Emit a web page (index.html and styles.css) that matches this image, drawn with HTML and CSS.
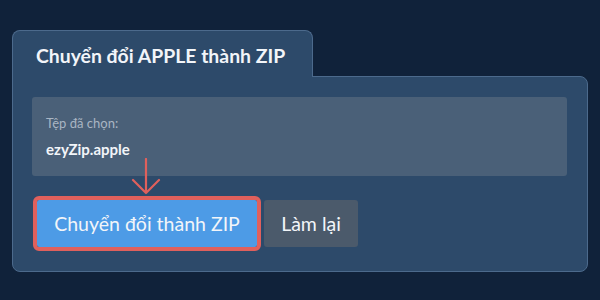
FILE: index.html
```html
<!DOCTYPE html>
<html lang="vi">
<head>
    <meta charset="UTF-8">
    <meta name="viewport" content="width=device-width, initial-scale=1.0">
    <title>Chuyển đổi APPLE thành ZIP</title>
    <link rel="stylesheet" href="styles.css">
</head>
<body>
    <div class="converter">
        <div class="tab">Chuyển đổi APPLE thành ZIP</div>

        <div class="panel">
            <div class="file-box">
                <div class="file-label">Tệp đã chọn:</div>
                <div class="file-name">ezyZip.apple</div>
            </div>

            <div class="actions">
                <div class="convert-wrap">
                    <!-- hint arrow pointing at the convert button -->
                    <svg class="hint-arrow" width="30" height="38" viewBox="0 0 30 38">
                        <path d="M15 1 V35 M2 22 L15 35 L28 22" fill="none" stroke="#e0605c" stroke-width="2.2" stroke-linecap="round" stroke-linejoin="round"/>
                    </svg>
                    <button class="btn btn-convert">Chuyển đổi thành ZIP</button>
                </div>
                <button class="btn btn-reset">Làm lại</button>
            </div>
        </div>
    </div>
</body>
</html>
```

FILE: styles.css
```css
:root {
    --page: #10223a;
    --panel: #2d4a6a;
    --panel-border: #4c6a8c;
    --box: #4a6078;
    --muted: #a9b5c3;
    --blue: #4d9be6;
    --red: #e0605c;
    --grey: #4b5a6b;
    --text: #f2f5f9;
}

body {
    margin: 0;
    padding: 30px 12px;
    background: var(--page);
    font-family: Lato, 'Noto Sans', sans-serif;
    color: var(--text);
}

.converter {
    display: flex;
    flex-direction: column;
    align-items: flex-start;
}

.tab {
    position: relative;
    z-index: 1;
    margin-bottom: -1px;
    padding: 15px 27px 11px 23px;
    background: var(--panel);
    border: 1px solid var(--panel-border);
    border-bottom: none;
    border-radius: 8px 8px 0 0;
    font-size: 19.4px;
    font-weight: 700;
    line-height: 20px;
}

.panel {
    align-self: stretch;
    padding: 20px 20px 20px 19px;
    background: var(--panel);
    border: 1px solid var(--panel-border);
    border-radius: 0 8px 8px 8px;
}

.file-box {
    height: 79px;
    box-sizing: border-box;
    padding: 18px 14px 0;
    background: var(--box);
    border-radius: 3px;
}

.file-label {
    font-size: 13px;
    line-height: 16px;
    color: var(--muted);
}

.file-name {
    margin-top: 8px;
    font-size: 15px;
    font-weight: 700;
    line-height: 20px;
}

.actions {
    display: flex;
    align-items: center;
    gap: 7px;
    margin-top: 20px;
    padding: 4px 0 4px 5px;
}

.convert-wrap {
    position: relative;
}

.hint-arrow {
    position: absolute;
    left: 50%;
    bottom: 100%;
    margin-left: -16px;
    margin-bottom: 4px;
}

.btn {
    height: 47px;
    padding: 0 12px;
    border: none;
    border-radius: 3px;
    font-family: inherit;
    font-size: 19.5px;
    color: var(--text);
    cursor: pointer;
}

.btn-convert {
    display: block;
    width: 220px;
    background: var(--blue);
    outline: 4px solid var(--red);
    border-radius: 2px;
}

.btn-reset {
    width: 94px;
    background: var(--grey);
}
```
